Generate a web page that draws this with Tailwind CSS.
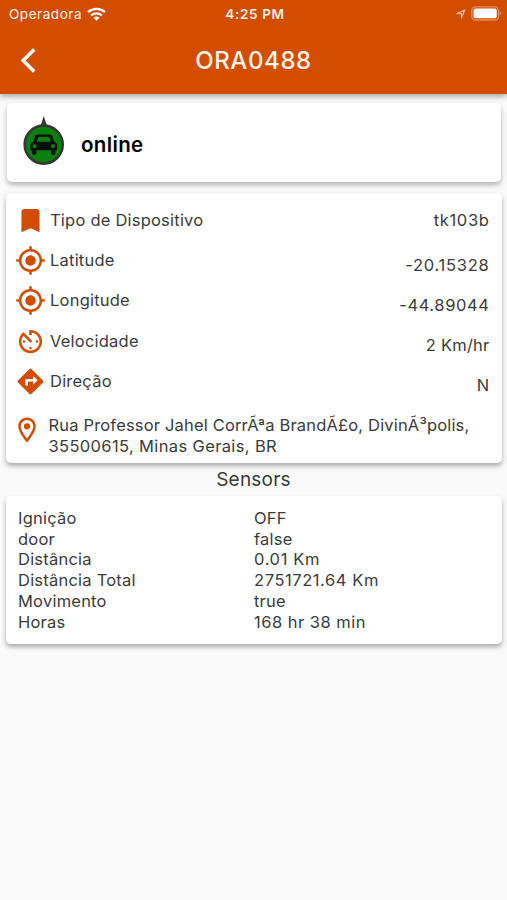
<!DOCTYPE html>
<html lang="pt">
<head>
<meta charset="utf-8">
<meta name="viewport" content="width=device-width">
<title>ORA0488</title>
<script src="https://cdn.jsdelivr.net/npm/@tailwindcss/browser@4"></script>
</head>
<body class="w-full h-[900px] overflow-hidden bg-[#fafafa] font-['Inter',sans-serif] text-[#3c3c3c] text-[16.5px] tracking-[0.22px]">
<header class="relative h-[94px] bg-[#d34d00] text-[#fff3ea] shadow-[0_2px_6px_rgba(0,0,0,0.38)]">
  <div class="grid grid-cols-3 items-center h-[28px] pl-[9px] pr-[5px]">
    <div class="flex items-center gap-[5px] text-[13.5px] tracking-[0.55px]"><span>Operadora</span>
      <svg class="w-[19px] h-[14px] -mt-[1px]" viewBox="0 0 19 14" fill="none" stroke="#fff" stroke-width="2.3"><path d="M1 5.2a12.3 12.3 0 0 1 17 0M4.1 8.5a7.8 7.8 0 0 1 10.8 0"/><path d="M9.5 13.8 6.4 10.8a4.6 4.6 0 0 1 6.2 0z" fill="#fff" stroke="none"/></svg>
    </div>
    <div class="text-center text-[13.5px] font-semibold tracking-[0.65px] -ml-[1px]">4:25 PM</div>
    <div class="flex items-center justify-end gap-[5px]">
      <svg class="w-[10px] h-[10px]" viewBox="0 0 11 11" fill="none" stroke="#f3b999" stroke-width="1.3" stroke-linejoin="round"><path d="M1 5 9.7 1.2 6 9.8V5z"/></svg>
      <svg class="w-[31px] h-[15px] -mt-[2px]" viewBox="0 0 31 15"><rect x=".8" y=".8" width="26.6" height="13.2" rx="3.6" fill="none" stroke="#e58b58" stroke-width="1.3"/><rect x="2.5" y="2.5" width="23.2" height="9.8" rx="2" fill="#fff"/><path d="M28.7 5.2c2 .7 2 3.700 0 4.400z" fill="#e58b58"/></svg>
    </div>
  </div>
  <div class="grid grid-cols-[100px_1fr_100px] items-center h-[64px]">
    <svg class="w-[29px] h-[29px] ml-[21px]" viewBox="0 0 24 24" fill="#fff" stroke="#fff" stroke-width=".5"><path d="M11.67 3.87 9.9 2.1 0 12l9.900 9.900 1.770-1.770L3.540 12z"/></svg>
    <h1 class="text-center text-[24px] font-medium tracking-[0.6px] pt-[1px]">ORA0488</h1>
  </div>
</header>
<main>
  <section class="mt-[9px] ml-[7px] mr-[6px] h-[79px] rounded-[5px] bg-white shadow-[0_3px_5px_rgba(0,0,0,0.28)] flex items-center pl-[16px]">
    <svg class="w-[42px] h-[50px] -mt-[3px]" viewBox="0 0 42 50"><path d="M20.8 0 25 13h-8.400z" fill="#363636"/><circle cx="20.700" cy="28.600" r="19" fill="#0a800d" stroke="#363636" stroke-width="2.600"/>
      <path fill="#06100a" fill-rule="evenodd" d="M14.700 18.500h12c1.500 0 2.400.8 2.800 2.100l1.600 5.100c2 .5 3 1.700 3 3.600v5h-1.600v2.400c0 3-4.400 3-4.400 0v-2.400H13.400v2.400c0 3-4.400 3-4.400 0v-2.400H7.400v-5c0-1.900 1-3.100 3-3.600l1.500-5.100c.4-1.300 1.300-2.100 2.800-2.100zm.6 2.600-1.400 4.600h13.600l-1.400-4.600zM11.500 28.300a2 2 0 1 0 0 4 2 2 0 0 0 0-4zm18.500 0a2 2 0 1 0 0 4 2 2 0 0 0 0-4z"/></svg>
    <span class="ml-[16px] mt-[5px] text-[20.5px] font-semibold tracking-[0.35px] text-black">online</span>
  </section>
  <section class="mt-[11px] ml-[6px] mr-[5px] h-[270px] rounded-[5px] bg-white shadow-[0_3px_5px_rgba(0,0,0,0.32)] pt-[7px] pl-[10px] pr-[12.5px]">
    <div class="flex items-center h-[40.3px]"><svg class="w-[31px] h-[31px] -ml-[1px] mr-[4px]" viewBox="0 0 24 24" fill="#d34d00"><path d="M17 3H7c-1.100 0-1.990.9-1.990 2L5 21l7-3 7 3V5c0-1.100-.9-2-2-2z"/></svg><span>Tipo de Dispositivo</span><span class="ml-auto tracking-[0.65px]">tk103b</span></div>
    <div class="flex items-center h-[40.3px]"><svg class="w-[31px] h-[31px] -ml-[1px] mr-[4px]" viewBox="0 0 24 24" fill="#d34d00"><path d="M12 8c-2.210 0-4 1.790-4 4s1.790 4 4 4 4-1.790 4-4-1.790-4-4-4zm8.940 3c-.46-4.170-3.770-7.480-7.940-7.940V1h-2v2.060C6.830 3.520 3.520 6.830 3.060 11H1v2h2.060c.46 4.170 3.770 7.480 7.940 7.940V23h2v-2.060c4.170-.46 7.480-3.770 7.940-7.940H23v-2h-2.060zM12 19c-3.870 0-7-3.130-7-7s3.130-7 7-7 7 3.130 7 7-3.130 7-7 7z"/></svg><span>Latitude</span><span class="ml-auto pt-[9px] tracking-[0.75px]">-20.15328</span></div>
    <div class="flex items-center h-[40.3px]"><svg class="w-[31px] h-[31px] -ml-[1px] mr-[4px]" viewBox="0 0 24 24" fill="#d34d00"><path d="M12 8c-2.210 0-4 1.790-4 4s1.790 4 4 4 4-1.790 4-4-1.790-4-4-4zm8.940 3c-.46-4.170-3.770-7.480-7.940-7.940V1h-2v2.060C6.830 3.520 3.520 6.830 3.060 11H1v2h2.060c.46 4.170 3.770 7.480 7.940 7.940V23h2v-2.060c4.170-.46 7.480-3.770 7.940-7.940H23v-2h-2.060zM12 19c-3.870 0-7-3.130-7-7s3.130-7 7-7 7 3.130 7 7-3.130 7-7 7z"/></svg><span>Longitude</span><span class="ml-auto pt-[9px] tracking-[0.6px]">-44.89044</span></div>
    <div class="flex items-center h-[40.3px]"><svg class="w-[31px] h-[31px] -ml-[1px] mr-[4px]" viewBox="0 0 24 24" fill="#d34d00"><path d="M11 17c0 .55.45 1 1 1s1-.45 1-1-.45-1-1-1-1 .45-1 1zm0-14v4h2V5.080c3.390.49 6 3.390 6 6.920 0 3.870-3.130 7-7 7s-7-3.130-7-7c0-1.680.59-3.220 1.580-4.420L12 13l1.410-1.410-6.800-6.800v.02C4.420 6.450 3 9.050 3 12c0 4.970 4.020 9 9 9 4.970 0 9-4.030 9-9s-4.030-9-9-9h-1zm7 9c0-.55-.45-1-1-1s-1 .45-1 1 .45 1 1 1 1-.45 1-1zM6 12c0 .55.45 1 1 1s1-.45 1-1-.45-1-1-1-1 .45-1 1z"/></svg><span>Velocidade</span><span class="ml-auto pt-[9px]">2 Km/hr</span></div>
    <div class="flex items-center h-[40.3px]"><svg class="w-[31px] h-[31px] -ml-[1px] mr-[4px]" viewBox="0 0 24 24" fill="#d34d00"><path d="M21.710 11.290l-9-9c-.39-.39-1.020-.39-1.410 0l-9 9c-.39.39-.39 1.020 0 1.410l9 9c.39.39 1.020.39 1.410 0l9-9c.39-.38.39-1.010 0-1.410zM14 14.500V12h-4v3H8v-4c0-.55.45-1 1-1h5V7.500l3.500 3.500-3.500 3.500z"/></svg><span>Direção</span><span class="ml-auto pt-[9px]">N</span></div>
    <div class="flex items-start mt-[14px]"><svg class="w-[30px] h-[30px] -ml-[4px] mr-[6.500px] shrink-0" viewBox="0 0 24 24" fill="#d34d00"><path d="M12 2C8.130 2 5 5.130 5 9c0 5.250 7 13 7 13s7-7.750 7-13c0-3.870-3.130-7-7-7zM7 9c0-2.760 2.240-5 5-5s5 2.240 5 5c0 2.880-2.880 7.190-5 9.880C9.920 16.210 7 11.850 7 9z"/><circle cx="12" cy="9" r="2.500"/></svg>
      <p class="leading-[20.7px] whitespace-nowrap"><span class="tracking-[0.17px]">Rua Professor Jahel CorrÃªa BrandÃ£o, DivinÃ³polis,</span><br><span class="tracking-[0.36px]">35500615, Minas Gerais, BR</span></p></div>
  </section>
  <h2 class="h-[33px] leading-[33px] text-center text-[19px]">Sensors</h2>
  <section class="ml-[6px] mr-[5px] h-[148px] rounded-[5px] bg-white shadow-[0_3px_5px_rgba(0,0,0,0.32)] pt-[12px] pl-[12px] grid grid-cols-[236px_1fr] content-start leading-[20.7px]">
    <span>Ignição</span><span>OFF</span>
    <span>door</span><span>false</span>
    <span>Distância</span><span class="tracking-[0.65px]">0.01 Km</span>
    <span>Distância Total</span><span class="tracking-[0.57px]">2751721.64 Km</span>
    <span>Movimento</span><span>true</span>
    <span>Horas</span><span class="tracking-[0.48px]">168 hr 38 min</span>
  </section>
</main>
</body>
</html>
